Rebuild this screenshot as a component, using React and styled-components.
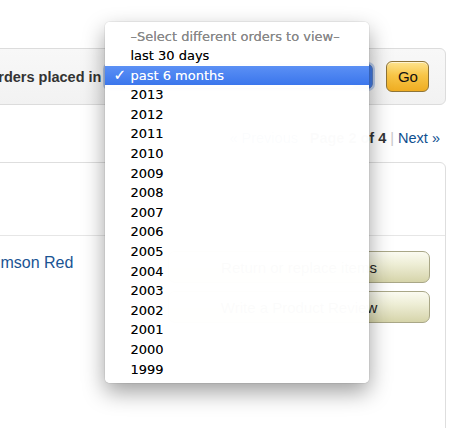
import React from "react";
import styled, { createGlobalStyle } from "styled-components";

const Global = createGlobalStyle`
  html, body { margin: 0; padding: 0; background: #fff; overflow: hidden; }
  body { font-family: "Liberation Sans", Arial, sans-serif; }
`;

const Page = styled.div`
  margin-left: -40px;
  width: 486px;
  padding-top: 48px;
`;

const FilterBar = styled.div`
  box-sizing: border-box;
  height: 57px;
  display: flex;
  align-items: center;
  padding: 0 18px 0 26px;
  border: 1px solid #dcdcdc;
  border-radius: 6px;
  background: linear-gradient(#f8f8f8, #f2f2f2);
`;

const Label = styled.span`
  font-weight: bold;
  font-size: 14.5px;
  color: #333;
  margin-right: 4px;
  white-space: nowrap;
`;

const SelectWrap = styled.div`
  position: relative;
  width: 268px;
  height: 25px;
  flex: none;
`;

const SelectBox = styled.div`
  box-sizing: border-box;
  height: 100%;
  border: 1px solid #5a7fc4;
  border-radius: 5px;
  background: linear-gradient(to right, #fff 0, #fff 246px, #6c9cf2 247px, #3f78e6 100%);
  box-shadow: 0 0 0 2px rgba(110, 150, 220, 0.45);
`;

const GoButton = styled.button`
  box-sizing: border-box;
  margin-left: 13px;
  width: 43px;
  height: 31px;
  flex: none;
  border: 1px solid #8f7538;
  border-radius: 6px;
  background: linear-gradient(#fde38e 0%, #f8c648 45%, #efad22 100%);
  box-shadow: inset 0 1px 0 rgba(255, 255, 255, 0.6);
  font-family: "Liberation Sans", Arial, sans-serif;
  font-size: 15px;
  color: #111;
  padding: 0;
`;

const Menu = styled.ul`
  position: absolute;
  left: 0;
  top: -42px;
  width: 264px;
  margin: 0;
  padding: 4.5px 0 3.5px;
  list-style: none;
  background: rgba(255, 255, 255, 0.985);
  border-radius: 5px;
  box-shadow: 0 0 0 1px rgba(0, 0, 0, 0.05), 0 9px 22px rgba(0, 0, 0, 0.38);
  z-index: 10;
  font-family: "DejaVu Sans", "Lucida Grande", sans-serif;
  font-size: 13px;
`;

const Item = styled.li`
  position: relative;
  height: 19.6px;
  line-height: 19.6px;
  padding-left: 25px;
  white-space: nowrap;
  text-shadow: 0 0 0.5px ${(p) => (p.$active ? "rgba(255,255,255,0.6)" : "rgba(0,0,0,0.45)")};
  color: ${(p) => (p.$header ? "#888" : p.$active ? "#fff" : "#000")};
  background: ${(p) => (p.$active ? "linear-gradient(#5b90f5, #3b76ec)" : "transparent")};
`;

const Check = styled.span`
  position: absolute;
  left: 8px;
  top: 0;
  font-size: 15px;
  font-weight: bold;
`;

const Pager = styled.div`
  padding: 24px 6px 0 0;
  line-height: 18px;
  font-size: 14.5px;
  text-align: right;
  color: #333;
  white-space: nowrap;
`;

const PagerLink = styled.a`
  color: #0f4f8f;
  text-decoration: none;
`;

const Sep = styled.span`
  color: #c8c8c8;
  margin: 0 4px;
`;

const Bold = styled.b`
  color: #333;
`;

const Card = styled.div`
  margin-top: 15px;
  box-sizing: border-box;
  min-height: 320px;
  border: 1px solid #dedede;
  border-radius: 6px;
`;

const CardHeader = styled.div`
  height: 72px;
  border-bottom: 1px solid #e6e6e6;
`;

const CardBody = styled.div`
  display: flex;
  justify-content: space-between;
  padding: 15px 15px 0 19px;
`;

const ItemLink = styled.a`
  margin-top: 3px;
  font-size: 16px;
  line-height: 18px;
  color: #1a5494;
  text-decoration: none;
  white-space: nowrap;
`;

const Actions = styled.div`
  width: 262px;
  display: flex;
  flex-direction: column;
  gap: 8px;
`;

const ActionButton = styled.button`
  box-sizing: border-box;
  height: 32px;
  border: 1px solid #a9a787;
  border-radius: 7px;
  background: linear-gradient(#fbfbf1 0%, #eeeed6 40%, #e0dfbd 75%, #d6d4aa 100%);
  font-family: "Liberation Sans", Arial, sans-serif;
  font-size: 15px;
  color: #222;
  padding: 0;
`;

const options = [
  "2013", "2012", "2011", "2010", "2009", "2008", "2007", "2006",
  "2005", "2004", "2003", "2002", "2001", "2000", "1999",
];

export default function App() {
  return (
    <>
      <Global />
      <Page>
        <FilterBar>
          <Label>Orders placed in</Label>
          <SelectWrap>
            <SelectBox />
            <Menu>
              <Item $header>–Select different orders to view–</Item>
              <Item>last 30 days</Item>
              <Item $active>
                <Check>✓</Check>past 6 months
              </Item>
              {options.map((o) => (
                <Item key={o}>{o}</Item>
              ))}
            </Menu>
          </SelectWrap>
          <GoButton>Go</GoButton>
        </FilterBar>
        <Pager>
          <PagerLink href="#">« Previous</PagerLink>
          <Sep>|</Sep>
          <Bold>Page 2 of 4</Bold>
          <Sep>|</Sep>
          <PagerLink href="#">Next »</PagerLink>
        </Pager>
        <Card>
          <CardHeader />
          <CardBody>
            <ItemLink href="#">Crimson Red</ItemLink>
            <Actions>
              <ActionButton>Return or replace items</ActionButton>
              <ActionButton>Write a Product Review</ActionButton>
            </Actions>
          </CardBody>
        </Card>
      </Page>
    </>
  );
}
